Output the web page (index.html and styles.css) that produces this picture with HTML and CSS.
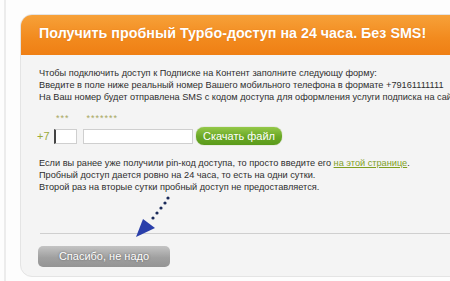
FILE: index.html
```html
<!DOCTYPE html>
<html>
<head>
<meta charset="utf-8">
<link rel="stylesheet" href="styles.css">
</head>
<body>
<div class="page">
  <div class="panel">
    <div class="header">Получить пробный Турбо-доступ на 24 часа. Без SMS!</div>
    <div class="content">
      <p class="intro">Чтобы подключить доступ к Подписке на Контент заполните следующу форму:<br>Введите в поле ниже реальный номер Вашего мобильного телефона в формате +79161111111<br>На Ваш номер будет отправлена SMS с кодом доступа для оформления услуги подписка на сайте</p>
      <div class="hints"><span class="h1">***</span><span class="h2">*******</span></div>
      <div class="form">
        <span class="code">+7</span>
        <span class="in in-short"></span>
        <span class="in in-long"></span>
        <span class="btn-green">Скачать файл</span>
      </div>
      <p class="info">Если вы ранее уже получили pin-код доступа, то просто введите его <a class="link">на этой странице</a>.<br>Пробный доступ дается ровно на 24 часа, то есть на одни сутки.<br>Второй раз на вторые сутки пробный доступ не предоставляется.</p>
      <div class="footer">
        <span class="btn-gray">Спасибо, не надо</span>
      </div>
      <svg class="arrow" width="40" height="44" viewBox="0 0 40 44">
        <circle cx="34" cy="3" r="1.6" fill="#1a2a5a"/>
        <circle cx="31" cy="8" r="1.6" fill="#1a2a5a"/>
        <circle cx="27" cy="13" r="1.6" fill="#1a2a5a"/>
        <circle cx="23" cy="18" r="1.6" fill="#1a2a5a"/>
        <circle cx="19" cy="23" r="1.6" fill="#1a2a5a"/>
        <polygon points="2,42 9,24 21,33" fill="#2a3faa"/>
      </svg>
    </div>
  </div>
</div>
</body>
</html>
```
FILE: styles.css
```css
html, body {
  margin: 0;
  padding: 0;
  background: #fdfdfd;
  overflow: hidden;
}
body {
  width: 450px;
  height: 281px;
}
.page {
  margin-left: 4px;
  border-left: 2px solid #ececec;
  height: 281px;
  padding: 14px 0 0 14px;
  box-sizing: border-box;
  overflow: hidden;
}
.panel {
  width: 460px;
  height: 263px;
  box-sizing: border-box;
  border: 1px solid #e4e4e4;
  border-radius: 12px;
  background: #f4f4f4;
  font-family: "Liberation Sans", Arial, sans-serif;
  overflow: hidden;
}
.header {
  height: 41px;
  margin: -1px -1px 0 -1px;
  border-radius: 12px 12px 0 0;
  background: linear-gradient(#f7a23a, #f28a1e 60%, #ef7f14);
  color: #fff;
  font-weight: bold;
  font-size: 14.3px;
  line-height: 39px;
  padding-left: 19px;
  white-space: nowrap;
  text-shadow: 0 0 1px rgba(200,90,0,0.5);
}
.content {
  position: relative;
  padding: 12px 0 0 18px;
  color: #2e2e2e;
  font-size: 9.2px;
  line-height: 12px;
}
.intro, .info {
  margin: 0;
  white-space: nowrap;
}
.hints {
  margin-top: 9px;
  height: 12px;
  font-size: 9px;
  color: #a8a860;
  letter-spacing: 1px;
}
.h1 { margin-left: 17px; }
.h2 { margin-left: 17px; }
.form {
  display: flex;
  align-items: center;
  margin-top: 2px;
  margin-left: -2px;
  height: 20px;
}
.code {
  color: #9aaa3a;
  font-size: 11px;
  width: 17px;
}
.in {
  height: 13px;
  background: #fff;
  border: 1px solid #cfcfcf;
  border-left: 2px solid #444;
}
.in-short { width: 20px; }
.in-long { width: 108px; margin-left: 6px; border-left: 1px solid #cfcfcf; }
.btn-green {
  margin-left: 3px;
  width: 86px;
  height: 18px;
  border-radius: 8px;
  background: linear-gradient(#94c848, #6aa826 55%, #5a9a1a);
  color: #fff;
  font-size: 11px;
  line-height: 18px;
  text-align: center;
  box-shadow: 0 0 1px #7aa040;
}
.info {
  margin-top: 11px;
}
.link {
  color: #7f9f1f;
  text-decoration: underline;
}
.footer {
  margin-top: 40px;
  margin-left: 1px;
  border-top: 1px solid #cfcfcf;
  padding-top: 12px;
}
.btn-gray {
  display: block;
  width: 132px;
  height: 21px;
  margin-left: -2px;
  border-radius: 5px;
  background: linear-gradient(#c4c4c4, #a0a0a0 55%, #949494);
  color: #fff;
  font-size: 11px;
  line-height: 21px;
  text-align: center;
  text-shadow: 0 0 2px #555;
}
.arrow {
  position: absolute;
  left: 113px;
  top: 140px;
}
```
